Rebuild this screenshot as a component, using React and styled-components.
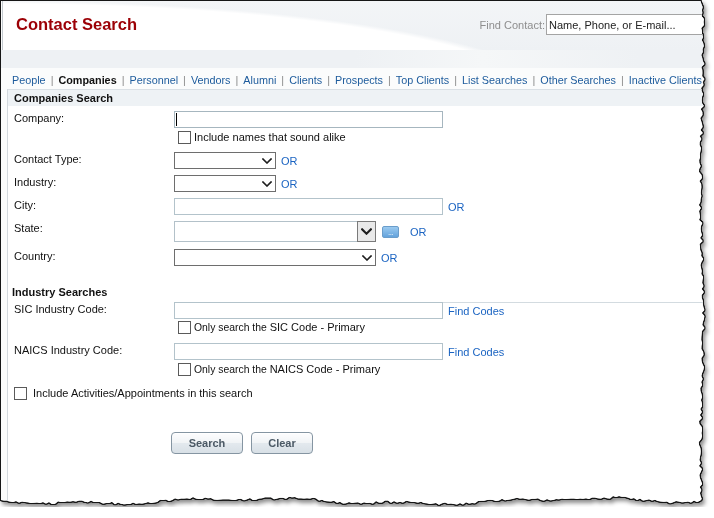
import React from 'react';
import styled, { createGlobalStyle } from 'styled-components';

const GlobalStyle = createGlobalStyle`
  html, body { margin: 0; padding: 0; background: #ffffff; }
  body {
    font-family: "Liberation Sans", Arial, sans-serif;
    font-size: 11px;
    color: #111;
  }
  * { box-sizing: border-box; }
`;

/* Deterministic jitter for the torn paper edge */
const noise = (i) => {
  const s = Math.sin(i * 12.9898 + 78.233) * 43758.5453;
  return s - Math.floor(s);
};

const tornEdge = (() => {
  const pts = ['0px 0px'];
  for (let y = 0; y <= 498; y += 3) {
    const x = 700.5 + 1.3 * Math.sin(y / 41) + (noise(y) - 0.5) * 3.6;
    pts.push(`${x.toFixed(1)}px ${y}px`);
  }
  for (let x = 699; x >= 0; x -= 3) {
    const y = 499.5 + 2.4 * Math.sin(x / 53) + 1.3 * Math.sin(x / 17) + (noise(x + 1000) - 0.5) * 2.8;
    pts.push(`${x}px ${y.toFixed(1)}px`);
  }
  pts.push('0px 498px');
  return `polygon(${pts.join(', ')})`;
})();

const Frame = styled.div`
  width: max-content;
  margin: 1px 0 0 1px;
  filter: drop-shadow(1px 0 0 #161616) drop-shadow(0 1px 0 #161616)
    drop-shadow(-1px 0 0 #161616) drop-shadow(0 -1px 0 #161616)
    drop-shadow(2px 3px 2px rgba(0, 0, 0, 0.45));
`;

const Sheet = styled.div`
  width: 708px;
  height: 506px;
  background: #fbfcfc;
  clip-path: ${tornEdge};
  display: flex;
  flex-direction: column;
  overflow: hidden;
`;

const Header = styled.header`
  height: 49px;
  flex-shrink: 0;
  display: flex;
  align-items: flex-start;
  margin-left: 1px;
  border-left: 1px solid #c4cacf;
  background:
    radial-gradient(ellipse 560px 100px at 0px 100px, #ffffff 97%, rgba(255, 255, 255, 0) 100%),
    linear-gradient(#f3f5f7, #eef1f4);
`;

const Title = styled.h1`
  margin: 13px 0 0 13px;
  font-size: 16.5px;
  line-height: 20px;
  font-weight: bold;
  color: #9c0006;
`;

const FindContact = styled.div`
  margin: 13px -7px 0 auto;
  display: flex;
  align-items: center;
  flex-shrink: 0;
`;

const FindLabel = styled.span`
  color: #8e8e8e;
  margin-right: 1px;
`;

const FindInput = styled.div`
  width: 170px;
  height: 21px;
  border: 1px solid #a4a4a4;
  background: #fff;
  color: #222;
  padding: 0 2px;
  display: flex;
  align-items: center;
`;

const Strip = styled.div`
  height: 18px;
  flex-shrink: 0;
  background: linear-gradient(90deg, #eef1f4 0%, #eef1f4 50%, #f5f7f8 68%, #eef1f4 90%);
`;

const Nav = styled.nav`
  display: flex;
  align-items: center;
  padding: 5px 0 2px 11px;
  font-size: 10.8px;
  line-height: 14px;
  white-space: nowrap;
  flex-shrink: 0;
`;

const NavLink = styled.span`
  color: ${(p) => (p.$active ? '#111' : '#1d5b9c')};
  font-weight: ${(p) => (p.$active ? 'bold' : 'normal')};
`;

const Sep = styled.span`
  color: #8a8a8a;
  margin: 0 5px;
`;

const Panel = styled.section`
  flex: 1;
  margin-left: 6px;
  border-left: 1px solid #d3d9de;
  background: #fff;
`;

const SectionBar = styled.div`
  height: 17px;
  border-top: 1px solid #dae0e5;
  background: #eef2f5;
  padding-left: 6px;
  font-weight: bold;
  line-height: 16px;
`;

const Form = styled.div`
  padding-left: 6px;
`;

const Row = styled.div`
  display: flex;
  align-items: flex-start;
  margin-top: ${(p) => p.$mt}px;
`;

const Label = styled.div`
  width: 160px;
  flex-shrink: 0;
  line-height: 14px;
`;

const Controls = styled.div`
  display: flex;
  align-items: center;
  flex: 1;
  padding-left: ${(p) => p.$indent || 0}px;
`;

const TextBox = styled.div`
  width: ${(p) => p.$w}px;
  height: ${(p) => p.$h || 17}px;
  border: 1px solid ${(p) => p.$border || '#b3c3cb'};
  background: #fff;
  flex-shrink: 0;
  position: relative;
  ${(p) =>
    p.$caret &&
    `&::before {
      content: '';
      position: absolute;
      left: 1px;
      top: 1px;
      width: 1px;
      height: 13px;
      background: #000;
    }`}
`;

const SelectBox = styled.div`
  width: ${(p) => p.$w}px;
  height: ${(p) => p.$h || 17}px;
  border: 1px solid ${(p) => p.$border || '#6e6e6e'};
  background: #fff;
  flex-shrink: 0;
  display: flex;
  align-items: center;
  justify-content: flex-end;
  padding-right: 3px;
`;

const ArrowCell = styled.div`
  width: 19px;
  align-self: stretch;
  margin: -1px -4px -1px 0;
  border: 1px solid #7a7a7a;
  background: #e9e9e9;
  display: flex;
  align-items: center;
  justify-content: center;
`;

const PickButton = styled.div`
  width: 17px;
  height: 12px;
  margin-left: 6px;
  border-radius: 2px;
  border: 1px solid #6a9dcb;
  background: linear-gradient(#9bcaf0, #64a3dc);
  color: #fff;
  font-size: 8px;
  line-height: 12px;
  text-align: center;
  letter-spacing: -0.5px;
`;

const Link = styled.span`
  color: #1b64c2;
  margin-left: ${(p) => (p.$ml !== undefined ? p.$ml : 5)}px;
  line-height: 14px;
`;

const CodeCell = styled.div`
  flex: 1;
  align-self: stretch;
  display: flex;
  align-items: center;
  border-top: 1px solid #d3dbe0;
  padding-bottom: 1px;
`;

const Check = styled.span`
  width: 13px;
  height: 13px;
  border: 1px solid #5a5a5a;
  background: #fff;
  flex-shrink: 0;
`;

const CheckText = styled.span`
  margin-left: ${(p) => p.$gap || 3}px;
  font-size: ${(p) => p.$size || 11}px;
  line-height: 13px;
`;

const Bigger = styled.span`
  font-size: 11px;
`;

const SubTitle = styled.div`
  margin: 19px 0 0 -2px;
  font-weight: bold;
  line-height: 14px;
`;

const ButtonRow = styled.div`
  display: flex;
  gap: 8px;
  margin-top: 32px;
  padding-left: 157px;
`;

const Button = styled.div`
  width: ${(p) => p.$w}px;
  height: 22px;
  border: 1px solid #8595a2;
  border-radius: 4px;
  background: linear-gradient(#fdfdfe 0%, #f1f4f6 48%, #e3e9ee 52%, #d8e0e6 100%);
  box-shadow: inset 0 1px 0 #ffffff;
  color: #4b5965;
  font-weight: bold;
  display: flex;
  align-items: center;
  justify-content: center;
`;

const Chevron = ({ bold }) => (
  <svg width={bold ? 11 : 10} height={bold ? 7 : 6} viewBox="0 0 10 6" aria-hidden="true">
    <path
      d="M1 1 L5 5 L9 1"
      fill="none"
      stroke="#1e1e1e"
      strokeWidth={bold ? 1.9 : 1.6}
      strokeLinecap="square"
    />
  </svg>
);

const navItems = [
  'People',
  'Companies',
  'Personnel',
  'Vendors',
  'Alumni',
  'Clients',
  'Prospects',
  'Top Clients',
  'List Searches',
  'Other Searches',
  'Inactive Clients',
];

export default function App() {
  return (
    <>
      <GlobalStyle />
      <Frame>
        <Sheet>
          <Header>
            <Title>Contact Search</Title>
            <FindContact>
              <FindLabel>Find Contact:</FindLabel>
              <FindInput>Name, Phone, or E-mail...</FindInput>
            </FindContact>
          </Header>
          <Strip />
          <Nav>
            {navItems.map((item, i) => (
              <React.Fragment key={item}>
                {i > 0 && <Sep>|</Sep>}
                <NavLink $active={item === 'Companies'}>{item}</NavLink>
              </React.Fragment>
            ))}
          </Nav>
          <Panel>
            <SectionBar>Companies Search</SectionBar>
            <Form>
              <Row $mt={5}>
                <Label>Company:</Label>
                <Controls>
                  <TextBox $w={269} $border="#a6b6bf" $caret />
                </Controls>
              </Row>
              <Row $mt={3}>
                <Label />
                <Controls $indent={4}>
                  <Check />
                  <CheckText>Include names that sound alike</CheckText>
                </Controls>
              </Row>
              <Row $mt={8}>
                <Label>Contact Type:</Label>
                <Controls>
                  <SelectBox $w={102}>
                    <Chevron />
                  </SelectBox>
                  <Link>OR</Link>
                </Controls>
              </Row>
              <Row $mt={6}>
                <Label>Industry:</Label>
                <Controls>
                  <SelectBox $w={102}>
                    <Chevron />
                  </SelectBox>
                  <Link>OR</Link>
                </Controls>
              </Row>
              <Row $mt={6}>
                <Label>City:</Label>
                <Controls>
                  <TextBox $w={269} />
                  <Link>OR</Link>
                </Controls>
              </Row>
              <Row $mt={6}>
                <Label>State:</Label>
                <Controls>
                  <SelectBox $w={202} $h={21} $border="#b3c1c9">
                    <ArrowCell>
                      <Chevron bold />
                    </ArrowCell>
                  </SelectBox>
                  <PickButton>...</PickButton>
                  <Link $ml={11}>OR</Link>
                </Controls>
              </Row>
              <Row $mt={7}>
                <Label>Country:</Label>
                <Controls>
                  <SelectBox $w={202}>
                    <Chevron />
                  </SelectBox>
                  <Link>OR</Link>
                </Controls>
              </Row>

              <SubTitle>Industry Searches</SubTitle>
              <Row $mt={3}>
                <Label>SIC Industry Code:</Label>
                <Controls>
                  <TextBox $w={269} />
                  <CodeCell>
                    <Link>Find Codes</Link>
                  </CodeCell>
                </Controls>
              </Row>
              <Row $mt={2}>
                <Label />
                <Controls $indent={4}>
                  <Check />
                  <CheckText $size={10.4}>
                    Only search the <Bigger>SIC Code - Primary</Bigger>
                  </CheckText>
                </Controls>
              </Row>
              <Row $mt={9}>
                <Label>NAICS Industry Code:</Label>
                <Controls>
                  <TextBox $w={269} />
                  <Link>Find Codes</Link>
                </Controls>
              </Row>
              <Row $mt={3}>
                <Label />
                <Controls $indent={4}>
                  <Check />
                  <CheckText $size={10.4}>
                    Only search the <Bigger>NAICS Code - Primary</Bigger>
                  </CheckText>
                </Controls>
              </Row>
              <Row $mt={11}>
                <Controls>
                  <Check />
                  <CheckText $gap={6}>Include Activities/Appointments in this search</CheckText>
                </Controls>
              </Row>

              <ButtonRow>
                <Button $w={72}>Search</Button>
                <Button $w={62}>Clear</Button>
              </ButtonRow>
            </Form>
          </Panel>
        </Sheet>
      </Frame>
    </>
  );
}
